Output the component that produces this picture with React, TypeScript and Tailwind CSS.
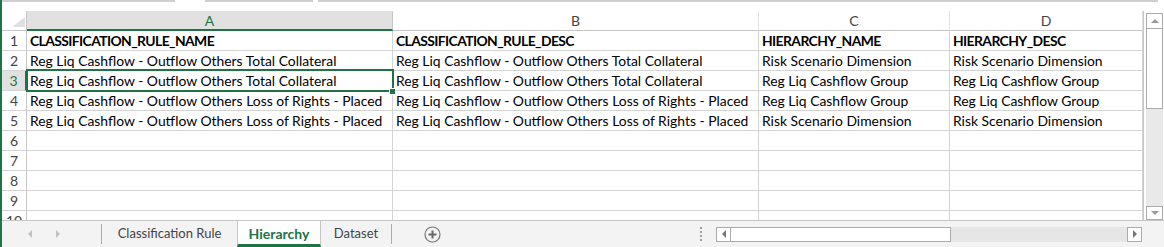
import React from "react";

const rows: string[][] = [
  ["CLASSIFICATION_RULE_NAME", "CLASSIFICATION_RULE_DESC", "HIERARCHY_NAME", "HIERARCHY_DESC"],
  [
    "Reg Liq Cashflow - Outflow Others Total Collateral",
    "Reg Liq Cashflow - Outflow Others Total Collateral",
    "Risk Scenario Dimension",
    "Risk Scenario Dimension",
  ],
  [
    "Reg Liq Cashflow - Outflow Others Total Collateral",
    "Reg Liq Cashflow - Outflow Others Total Collateral",
    "Reg Liq Cashflow Group",
    "Reg Liq Cashflow Group",
  ],
  [
    "Reg Liq Cashflow - Outflow Others Loss of Rights - Placed",
    "Reg Liq Cashflow - Outflow Others Loss of Rights - Placed",
    "Reg Liq Cashflow Group",
    "Reg Liq Cashflow Group",
  ],
  [
    "Reg Liq Cashflow - Outflow Others Loss of Rights - Placed",
    "Reg Liq Cashflow - Outflow Others Loss of Rights - Placed",
    "Risk Scenario Dimension",
    "Risk Scenario Dimension",
  ],
  ["", "", "", ""],
  ["", "", "", ""],
  ["", "", "", ""],
  ["", "", "", ""],
  ["", "", "", ""],
];

const colW = ["w-[366px]", "w-[366px]", "w-[191px]", "w-[193px]"];
const letters = ["A", "B", "C", "D"];

function HeaderRow() {
  return (
    <div className="flex h-[20px] shrink-0">
      <div className="relative w-[25px] h-[20px] border-r border-b border-[#c6c6c6] bg-white">
        <svg className="absolute left-[10px] top-[6px]" width="13" height="10" viewBox="0 0 13 10">
          <polygon points="0,10 13,10 13,0" fill="#dfdfdf" />
        </svg>
      </div>
      {letters.map((l, i) => (
        <div
          key={l}
          className={
            colW[i] +
            " h-[20px] flex items-center justify-center text-[14px] border-r " +
            (i === 0
              ? "bg-[#e1e1e1] text-[#217346] border-[#c6c6c6] border-b-2 border-b-[#217346]"
              : "bg-white text-[#444] border-[#e1e1e1] border-b border-b-[#c6c6c6]")
          }
        >
          {l}
        </div>
      ))}
    </div>
  );
}

function DataRow({ n, cells }: { n: number; cells: string[] }) {
  const sel = n === 3;
  return (
    <div className="flex h-[20px] shrink-0">
      <div
        className={
          "w-[25px] h-[20px] flex items-center justify-center text-[14px] border-b border-[#d4d4d4] " +
          (sel
            ? "bg-[#e1e1e1] text-[#217346] border-r-2 border-r-[#217346]"
            : "bg-white text-[#444] border-r border-r-[#c6c6c6]")
        }
      >
        {n}
      </div>
      {cells.map((c, i) => (
        <div
          key={i}
          className={
            colW[i] +
            " h-[20px] flex items-center pl-[3px] pt-[1px] whitespace-nowrap overflow-hidden text-[13.9px] text-black border-r border-b border-[#d4d4d4] " +
            (n === 1 ? "font-bold tracking-[-0.6px]" : "")
          }
        >
          {c}
        </div>
      ))}
    </div>
  );
}

function Tri({ dir, color, size = 4 }: { dir: "up" | "down" | "left" | "right"; color: string; size?: number }) {
  const s = size;
  let pts = "";
  let w = s * 2;
  let h = s;
  if (dir === "up") pts = `0,${s} ${s},0 ${2 * s},${s}`;
  if (dir === "down") pts = `0,0 ${2 * s},0 ${s},${s}`;
  if (dir === "left") {
    w = s;
    h = s * 2;
    pts = `${s},0 ${s},${2 * s} 0,${s}`;
  }
  if (dir === "right") {
    w = s;
    h = s * 2;
    pts = `0,0 ${s},${s} 0,${2 * s}`;
  }
  return (
    <svg width={w} height={h} viewBox={`0 0 ${w} ${h}`}>
      <polygon points={pts} fill={color} />
    </svg>
  );
}

export default function App() {
  return (
    <div className="w-[1164px] h-[247px] bg-white flex overflow-hidden font-['Lato',sans-serif]">
      <div className="w-[2px] shrink-0 bg-[#217346]" />
      <div className="flex-1 flex flex-col min-w-0">
        {/* top strip */}
        <div className="h-[11px] shrink-0 flex items-start">
          <div className="w-[173px] h-[2px] bg-[#d0d0d0]" />
          <div className="w-[30px] h-[2px]" />
          <div className="w-[108px] h-[2px] bg-[#d0d0d0]" />
          <div className="w-[5px] h-[2px]" />
          <div className="w-[840px] h-[2px] bg-[#d0d0d0]" />
        </div>
        {/* grid area */}
        <div className="h-[210px] shrink-0 flex border-b border-[#c6c6c6]">
          <div className="relative w-[1142px] h-[209px] overflow-hidden flex flex-col border-r border-[#c6c6c6]">
            <HeaderRow />
            {rows.map((r, i) => (
              <DataRow key={i} n={i + 1} cells={r} />
            ))}
            {/* active cell */}
            <div className="absolute left-[24px] top-[58px] w-[368px] h-[23px] border-2 border-[#217346]" />
            <div className="absolute left-[387px] top-[77px] w-[7px] h-[7px] bg-[#217346] border border-white" />
          </div>
          <div className="w-[2px]" />
          {/* vertical scrollbar */}
          <div className="w-[17px] flex flex-col pt-[2px]">
            <div className="h-[16px] border border-[#ababab] bg-white flex items-center justify-center">
              <Tri dir="up" color="#9a9a9a" />
            </div>
            <div className="h-[80px] border border-t-0 border-[#ababab] bg-white" />
            <div className="flex-1 bg-[#e9e9e9]" />
            <div className="h-[14px] border border-[#ababab] bg-white flex items-center justify-center">
              <Tri dir="down" color="#9a9a9a" />
            </div>
          </div>
        </div>
        {/* tab bar */}
        <div className="flex-1 bg-[#f3f3f3] flex items-stretch">
          <div className="w-[99px] flex items-center pl-[26px] gap-[24px]">
            <Tri dir="left" color="#c2c2c2" />
            <Tri dir="right" color="#c2c2c2" />
          </div>
          <div className="w-[1px] my-[3px] bg-[#ababab]" />
          <div className="w-[135px] flex items-center justify-center text-[13px] text-[#444]">
            Classification Rule
          </div>
          <div className="w-[84px] bg-white border-l border-r border-[#c6c6c6] border-b-[3px] border-b-[#217346] flex items-center justify-center text-[14px] font-bold text-[#217346] pt-[2px]">
            Hierarchy
          </div>
          <div className="w-[70px] flex items-center justify-center text-[13px] text-[#444]">
            Dataset
          </div>
          <div className="w-[1px] my-[3px] bg-[#ababab]" />
          <div className="w-[60px] flex items-center pl-[32px] pt-[1px]">
            <svg width="17" height="17" viewBox="0 0 17 17">
              <circle cx="8.5" cy="8.5" r="7.5" fill="none" stroke="#777" strokeWidth="1.2" />
              <line x1="8.5" y1="4.5" x2="8.5" y2="12.5" stroke="#666" strokeWidth="2" />
              <line x1="4.5" y1="8.5" x2="12.5" y2="8.5" stroke="#666" strokeWidth="2" />
            </svg>
          </div>
          <div className="w-[241px]" />
          <div className="w-[16px] flex flex-col items-center justify-center gap-[2px]">
            <div className="w-[2px] h-[2px] bg-[#a0a0a0]" />
            <div className="w-[2px] h-[2px] bg-[#a0a0a0]" />
            <div className="w-[2px] h-[2px] bg-[#a0a0a0]" />
            <div className="w-[2px] h-[2px] bg-[#a0a0a0]" />
          </div>
          <div className="w-[7px]" />
          {/* horizontal scrollbar */}
          <div className="w-[426px] flex items-center">
            <div className="w-[426px] h-[15px] flex">
              <div className="w-[15px] h-[15px] border border-[#ababab] bg-white flex items-center justify-center">
                <Tri dir="left" color="#777" />
              </div>
              <div className="w-[220px] h-[15px] border border-l-0 border-[#ababab] bg-white" />
              <div className="flex-1 h-[15px] bg-[#e6e6e6]" />
              <div className="w-[15px] h-[15px] border border-[#ababab] bg-white flex items-center justify-center">
                <Tri dir="right" color="#777" />
              </div>
            </div>
          </div>
        </div>
      </div>
    </div>
  );
}
